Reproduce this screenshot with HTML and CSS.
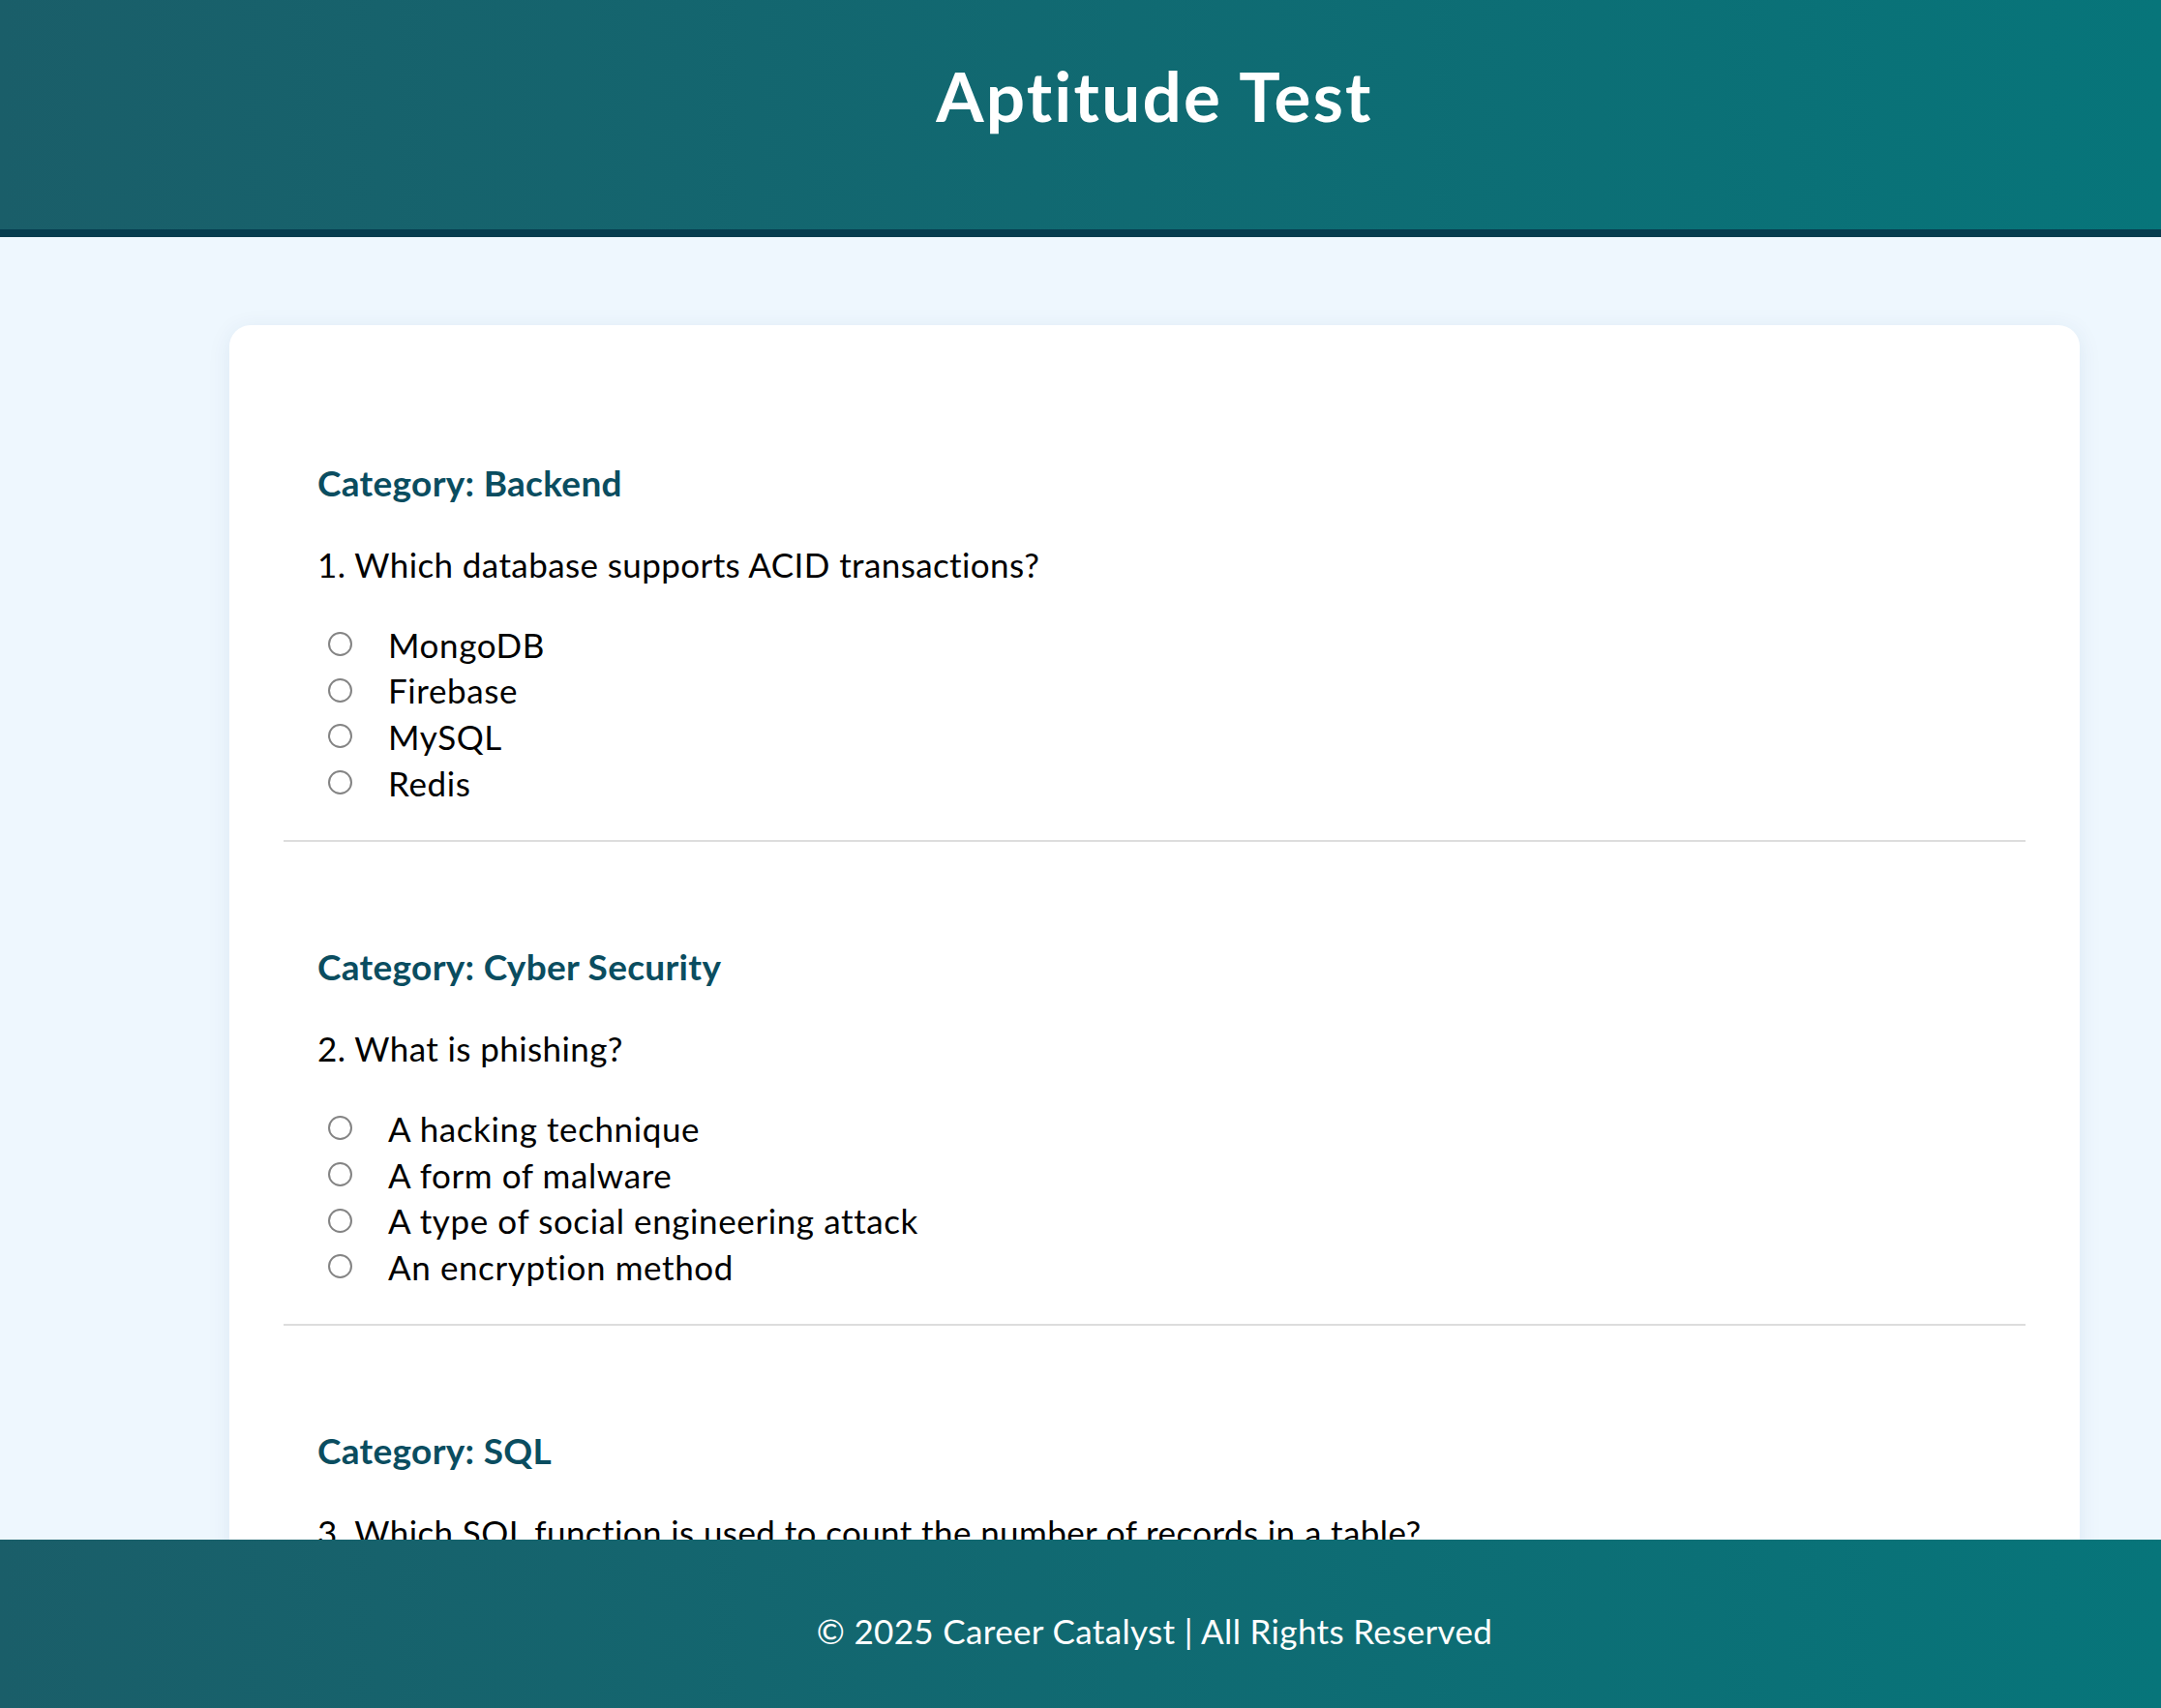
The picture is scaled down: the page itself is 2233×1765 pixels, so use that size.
FILE: index.html
```html
<!DOCTYPE html>
<html lang="en">
<head>
<meta charset="utf-8">
<title>Aptitude Test</title>
<link rel="stylesheet" href="styles.css">
</head>
<body>
<div class="page">
  <header class="site-header">
    <h1 class="title">Aptitude Test</h1>
  </header>
  <main class="content">
    <section class="card">
      <div class="question">
        <h2 class="category">Category: Backend</h2>
        <p class="q-text">1. Which database supports ACID transactions?</p>
        <div class="options">
          <label class="option"><input type="radio" name="q1"><span>MongoDB</span></label>
          <label class="option"><input type="radio" name="q1"><span>Firebase</span></label>
          <label class="option"><input type="radio" name="q1"><span>MySQL</span></label>
          <label class="option"><input type="radio" name="q1"><span>Redis</span></label>
        </div>
      </div>
      <div class="question">
        <h2 class="category">Category: Cyber Security</h2>
        <p class="q-text">2. What is phishing?</p>
        <div class="options">
          <label class="option"><input type="radio" name="q2"><span>A hacking technique</span></label>
          <label class="option"><input type="radio" name="q2"><span>A form of malware</span></label>
          <label class="option"><input type="radio" name="q2"><span>A type of social engineering attack</span></label>
          <label class="option"><input type="radio" name="q2"><span>An encryption method</span></label>
        </div>
      </div>
      <div class="question">
        <h2 class="category">Category: SQL</h2>
        <p class="q-text">3. Which SQL function is used to count the number of records in a table?</p>
        <div class="options">
          <label class="option"><input type="radio" name="q3"><span>COUNT()</span></label>
          <label class="option"><input type="radio" name="q3"><span>SUM()</span></label>
          <label class="option"><input type="radio" name="q3"><span>TOTAL()</span></label>
          <label class="option"><input type="radio" name="q3"><span>NUMBER()</span></label>
        </div>
      </div>
    </section>
  </main>
  <footer class="site-footer">
    <p class="footer-text">© 2025 Career Catalyst | All Rights Reserved</p>
  </footer>
</div>
</body>
</html>
```

FILE: styles.css
```css
html, body {
  margin: 0;
  height: 100%;
}

body {
  background: #eef7fe;
  font-family: Lato, "Open Sans", sans-serif;
  color: #000;
  overflow: hidden;
}

.page {
  display: flex;
  flex-direction: column;
  height: 100vh;
}

.site-header {
  flex: none;
  background: linear-gradient(90deg, #1a5e69 0%, #07757a 100%);
  border-bottom: 8px solid #063d4f;
  padding: 57px 0 96px 153px;
  text-align: center;
}

.title {
  margin: 0;
  font-size: 71px;
  line-height: 84px;
  font-weight: 700;
  letter-spacing: 2.2px;
  color: #fff;
}

.content {
  flex: 1;
  min-height: 0;
  overflow: hidden;
  padding: 91px 0 0 153px;
}

.card {
  max-width: 1912px;
  margin: 0 auto;
  background: #fff;
  border-radius: 22px;
  box-shadow: 0 4px 24px rgba(0, 60, 110, 0.08);
  padding: 56px;
  box-sizing: border-box;
}

.question {
  padding: 82.7px 35px 34.7px;
  border-bottom: 2px solid #ddd;
  margin-bottom: 22px;
}

.category {
  margin: 0 0 36px;
  font-size: 37px;
  line-height: 48px;
  font-weight: 700;
  letter-spacing: 0.3px;
  color: #0a4d60;
}

.q-text {
  margin: 0 0 36px;
  font-size: 35px;
  line-height: 48px;
  letter-spacing: 0.4px;
}

.options {
  display: flex;
  flex-direction: column;
}

.option {
  display: flex;
  align-items: center;
  height: 47.7px;
  font-size: 35px;
  line-height: 47.7px;
  letter-spacing: 0.6px;
}

.option input {
  appearance: none;
  -webkit-appearance: none;
  flex: none;
  width: 25px;
  height: 25px;
  margin: 0 37px 2px 11px;
  border: 2px solid #848484;
  border-radius: 50%;
  box-sizing: border-box;
  background: #fff;
}

.site-footer {
  flex: none;
  height: 174px;
  box-sizing: border-box;
  padding: 72.5px 0 0 153px;
  text-align: center;
  background: linear-gradient(90deg, #1a5e69 0%, #07757a 100%);
  color: #fff;
}

.footer-text {
  margin: 0;
  font-size: 35px;
  line-height: 42px;
  letter-spacing: 0.35px;
}
```
